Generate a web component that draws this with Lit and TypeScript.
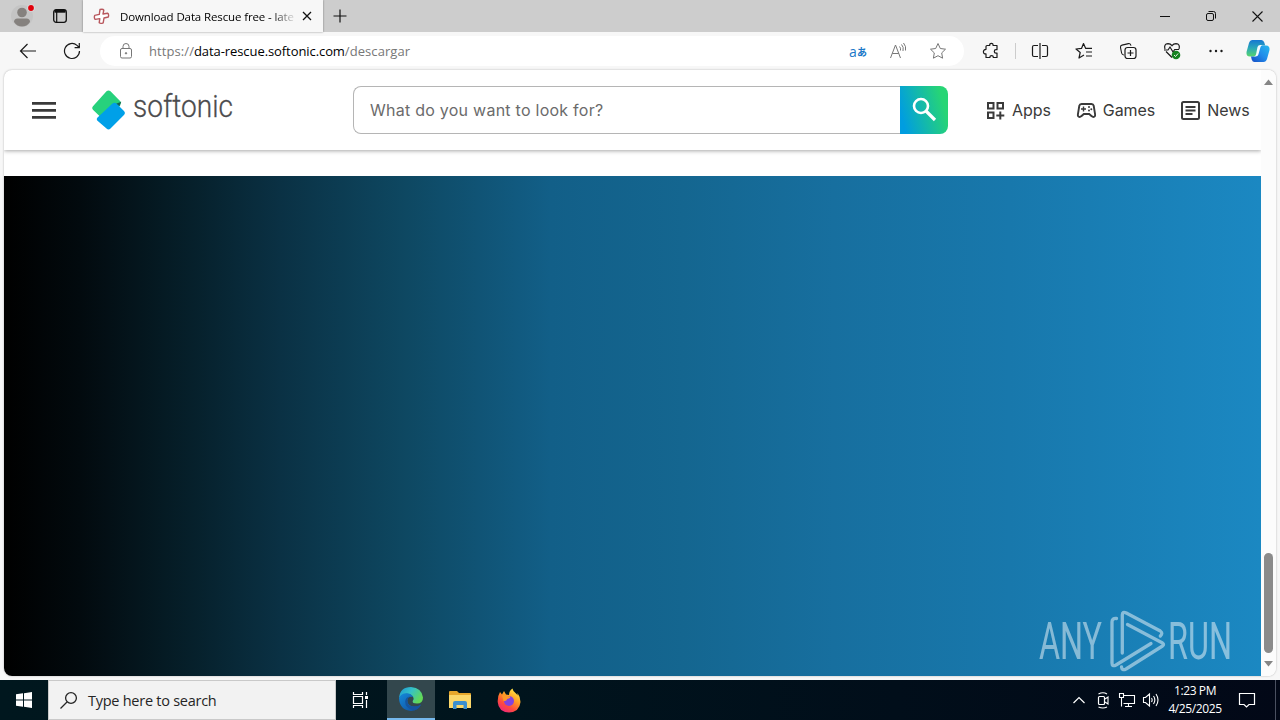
import { LitElement, html, svg, css } from 'lit';
import { customElement, state } from 'lit/decorators.js';

// wraps svg content in a square icon drawn at its natural size
const icon = (size: number, content: unknown) => html`
    <svg width="${size}" height="${size}" viewBox="0 0 ${size} ${size}" fill="none" stroke="currentColor">${content}</svg>
`;

@customElement('app-tabs')
export class Tabs extends LitElement {

    static styles = [
        css`
            :host {
                display: flex;
                height: 32px;
                background: #cdcdcd;
                font: 12px "Open Sans", "Noto Sans", sans-serif;
                color: #111;
            }

            svg {
                display: block;
                flex: none;
            }

            .cell {
                display: flex;
                align-items: center;
                justify-content: center;
            }

            .profile {
                width: 44px;
            }

            .actions {
                width: 32px;
            }

            .tab {
                display: flex;
                align-items: center;
                box-sizing: border-box;
                width: 240px;
                margin-left: 7px;
                padding: 0 7px 0 10px;
                background: #f7f7f7;
                box-shadow: 0 0 2px rgba(0, 0, 0, 0.4);
            }

            .title {
                width: 179px;
                margin-left: 10px;
                white-space: nowrap;
                font-size: 11.5px;
                letter-spacing: -0.12px;
                color: #000;
                -webkit-mask-image: linear-gradient(90deg, #000 152px, transparent 177px);
            }

            .close {
                width: 18px;
            }

            .new {
                width: 34px;
            }

            .window {
                display: flex;
                margin-left: auto;
            }

            .window .cell {
                width: 46px;
            }
        `
    ];

    render() {
        return html`
          <div class="cell profile">
              <svg width="32" height="32" viewBox="0 0 32 32">
                  <circle cx="16" cy="16" r="11" fill="#c4c4c4"></circle>
                  <circle cx="16" cy="12.500" r="4.800" fill="#85817e"></circle>
                  <path d="M8 22q0-3.500 3.500-3.500h9q3.500 0 3.500 3.500-3 4.500-8 4.500T8 22z" fill="#85817e"></path>
                  <circle cx="25" cy="8" r="3.600" fill="#e3e3e3"></circle>
                  <circle cx="25" cy="8" r="2.900" fill="#e0000b"></circle>
              </svg>
          </div>
          <div class="cell actions">
              ${icon(16, svg`<rect x="1.700" y="1.700" width="12.600" height="12.600" rx="2.500" stroke-width="1.300"></rect><path d="M4.700 4v10" stroke-width="1.200"></path><path d="M2.500 3.300h11" stroke-width="2.800"></path>`)}
          </div>
          <div class="tab">
              <svg width="17" height="17" viewBox="0 0 17 17" fill="#fff" stroke="#b8585e" stroke-width="1.400" stroke-linejoin="round">
                  <path d="M7 1.500q3-.8 3.800.6L10 6l4.500-.8q1.700 1 .8 3.800L11 10l-.8 4.800q-2.500 1.200-4 0l.6-4.200-4.600.8Q.8 10 1.700 7.400l4.600-1z"></path>
              </svg>
              <div class="title">Download Data Rescue free - late</div>
              <div class="cell close">${icon(10, svg`<path d="M1 1l8 8M9 1l-8 8" stroke-width="1.300"></path>`)}</div>
          </div>
          <div class="cell new">${icon(14, svg`<path d="M7 .5v13M.5 7h13" stroke-width="1.200"></path>`)}</div>
          <div class="window">
              <div class="cell">${icon(10, svg`<path d="M0 5.500h10"></path>`)}</div>
              <div class="cell">${icon(10, svg`<rect x=".500" y="2.500" width="7" height="7" rx="1.500"></rect><path d="M2.500.5h5q2 0 2 2v5"></path>`)}</div>
              <div class="cell">${icon(11, svg`<path d="M.5.500l10 10M10.500.500l-10 10" stroke-width="1.100"></path>`)}</div>
          </div>
        `;
    }
}

@customElement('app-toolbar')
export class Toolbar extends LitElement {

    static styles = [
        css`
            :host {
                display: flex;
                align-items: center;
                height: 38px;
                padding-left: 6px;
                background: #f7f7f7;
                color: #1a1a1a;
                font: 13px "Open Sans", "Noto Sans", sans-serif;
            }

            svg {
                display: block;
            }

            .cell {
                display: flex;
                align-items: center;
                justify-content: center;
                width: 44px;
            }

            .address {
                display: flex;
                align-items: center;
                box-sizing: border-box;
                width: 864px;
                height: 30px;
                margin: 0 5px 0 6px;
                padding: 0 6px 0 16px;
                border-radius: 15px;
                background: #fff;
                color: #777;
            }

            .url {
                margin: 0 auto 0 13px;
                font-size: 13px;
            }

            .path {
                letter-spacing: 0.08px;
            }

            .host {
                color: #000;
                letter-spacing: -0.08px;
            }

            .address .cell {
                width: 40px;
            }

            .translate {
                color: #1a78c8;
                font: 14px "Open Sans", "Noto Sans CJK JP", sans-serif;
            }

            .translate small {
                font: bold 10px "Noto Sans CJK JP", sans-serif;
            }

            .divider {
                width: 1px;
                height: 16px;
                margin: 0 2px;
                background: #ccc;
            }

            .copilot {
                width: 40px;
            }
        `
    ];

    render() {
        return html`
          <div class="cell">${icon(18, svg`<path d="M17 9H1.500M8.500 2l-7 7 7 7" stroke-width="1.200"></path>`)}</div>
          <div class="cell">${icon(18, svg`<path d="M16.500 9A7.500 7.500 0 1 1 14 3.400L16.300 5.500M16.300 1v4.700h-4.700" stroke-width="1.200"></path>`)}</div>

          <div class="address">
              ${icon(20, svg`<rect x="4.500" y="7.500" width="11" height="9.500" rx="1.500"></rect><path d="M7 7V5.500q0-3 3-3t3 3V7"></path><circle cx="10" cy="12.300" r=".700" fill="currentColor"></circle>`)}
              <div class="url"><span class="path">https://</span><span class="host">data-rescue.softonic.com</span><span class="path">/descargar</span></div>
              <div class="cell translate">a<small>あ</small></div>
              <div class="cell">${icon(18, svg`<path d="M1.500 16L6.500 3l5 13M3.300 11.500h6.500M10.500 4.500q1.500 1.500 1 4M12.500 2.500q2.500 2.500 1.500 6.500M14.500 1q3 3.500 2 7.500"></path>`)}</div>
              <div class="cell">${icon(18, svg`<path d="M9 1.500l2.300 5 5.200.7-3.800 3.700.9 5.300L9 13.700l-4.600 2.500.9-5.300L1.500 7.200l5.200-.7z" stroke-linejoin="round"></path>`)}</div>
          </div>

          <div class="cell">${icon(18, svg`<path d="M5 3.500h2.700V3q0-1.700 1.700-1.700T11.100 3v.5H15v4.200h-1q-1.700 0-1.700 1.700t1.700 1.700h1v4.400h-3.700v-.4q0-1.400-1.700-1.400t-1.700 1.400v.4H4v-3.600q-2.600.1-2.600-2.100T4 7.300V4.500q0-1 1-1z" stroke-width="1.200" stroke-linejoin="round"></path>`)}</div>
          <div class="divider"></div>
          <div class="cell">${icon(18, svg`<path d="M7 3.500H3q-1.500 0-1.500 1.500v8q0 1.500 1.500 1.500h4M9 1v16M11 3.500h4q1.500 0 1.500 1.500v8q0 1.500-1.500 1.500h-4" stroke-width="1.200"></path>`)}</div>
          <div class="cell">${icon(18, svg`<path d="M9 13L4 16l1.200-5.500L1 7l5.500-.6L8.500 1.500l2.200 4.900H17M11 10h6M11 14h6" stroke-width="1.200" stroke-linejoin="round"></path>`)}</div>
          <div class="cell">${icon(18, svg`<path d="M5 13q-2 0-2.400-2L1.500 5.500q-.3-2 1.500-2.400l6.500-1.500q2-.4 2.500 2" stroke-width="1.100"></path><rect x="6" y="5.500" width="11" height="11" rx="2.500" stroke-width="1.200"></rect><path d="M11.500 8v6M8.500 11h6" stroke-width="1.200"></path>`)}</div>
          <div class="cell">${icon(18, svg`<path d="M3 9.500L9 15.500M2 7Q.5 2 5 1.700q2.500 0 4 2 1.500-2 4-2Q17.500 2 16 7M1 8h4l2-3 3 5 1.700-2.500H16" stroke-width="1.200"></path><circle cx="13" cy="13" r="4.300" fill="#168321" stroke="none"></circle><path d="M11 13l1.500 1.500 2.600-3" stroke="#fff" stroke-width=".900"></path>`)}</div>
          <div class="cell">${icon(18, svg`<g fill="currentColor" stroke="none"><circle cx="3.500" cy="9" r="1.200"></circle><circle cx="9" cy="9" r="1.200"></circle><circle cx="14.500" cy="9" r="1.200"></circle></g>`)}</div>
          <div class="cell copilot">
              <svg width="26" height="26" viewBox="0 0 26 26">
                  <defs>
                      <linearGradient id="left" x1="0" y1="0" x2="0" y2="1"><stop offset="0" stop-color="#1677d2"></stop><stop offset=".5" stop-color="#2ba9b8"></stop><stop offset="1" stop-color="#58d56c"></stop></linearGradient>
                      <linearGradient id="right" x1="1" y1="0" x2="0" y2="1"><stop offset="0" stop-color="#25b9ee"></stop><stop offset=".5" stop-color="#218bea"></stop><stop offset="1" stop-color="#154cc4"></stop></linearGradient>
                  </defs>
                  <path d="M7.500 2h9q2 0 2.800 2.500l.9 3h-3.700q-2 0-2.600 2L12 16q-.7 2.500-3 2.500H5Q1 18.500 1.500 14L4 5q1-3 3.500-3z" fill="url(#left)"></path>
                  <path d="M18.500 24h-9Q7.500 24 6.700 21.500l-.7-3h3q2.300 0 3-2.500L14 9.500q.6-2 2.500-2H21q4 0 3.500 4.500L22 21q-1 3-3.500 3z" fill="url(#right)"></path>
                  <path d="M12.500 9q.6-2 2.800-2h2.200q-1.500.3-2 2L13.400 16.500q-.6 2-2.800 2H8.500q2 0 2.500-2z" fill="#f4fbff"></path>
              </svg>
          </div>
        `;
    }
}

@customElement('app-page')
export class Page extends LitElement {

    @state() links = [
        { name: 'Apps', art: svg`<path d="M3 3h5.500v5.500H3zM12.500 3H18v5.500h-5.500zM3 12.500h5.500V18H3zM15.300 11.500v8M11.300 15.500h8" stroke-width="2"></path>` },
        { name: 'Games', art: svg`<path d="M5.500 4h10q1.800 0 2.200 1.800l1.400 8.500q.3 2.700-1.700 2.700-1 0-1.700-.8L13.200 14H7.800l-2.500 2.200q-.7.800-1.700.8-2 0-1.700-2.700l1.400-8.500Q3.700 4 5.500 4z" stroke-width="1.900"></path><path d="M7.500 6.500v5M5 9h5" stroke-width="1.400"></path><g fill="currentColor" stroke="none"><circle cx="13" cy="7" r="1"></circle><circle cx="15.300" cy="9.300" r="1"></circle><circle cx="13" cy="10.500" r="1"></circle></g>` },
        { name: 'News', art: svg`<rect x="2" y="2" width="17" height="17" rx="1.500" stroke-width="2"></rect><path d="M5.500 7h10M5.500 10.500h10M5.500 14h7" stroke-width="1.800"></path>` }
    ];

    static styles = [
        css`
            :host {
                display: flex;
                height: 606px;
                margin: 0 4px 4px;
                border-radius: 8px;
                overflow: hidden;
                background: #fff;
                box-shadow: 0 0 2px rgba(0, 0, 0, 0.3);
                font-family: Inter, "Liberation Sans", sans-serif;
                color: #3a3a3a;
            }

            svg {
                display: block;
                flex: none;
                overflow: visible;
            }

            main {
                display: flex;
                flex-direction: column;
                width: 1257px;
            }

            header {
                display: flex;
                align-items: center;
                box-sizing: border-box;
                height: 80px;
                padding: 0 12px 0 28px;
                box-shadow: 0 1px 4px rgba(0, 0, 0, 0.35);
            }

            .logo {
                margin-left: 35px;
            }

            .logo text {
                font: 300 31px Roboto, sans-serif;
                fill: #4b4b4d;
                stroke: #4b4b4d;
                stroke-width: 0.3px;
            }

            .search {
                display: flex;
                width: 595px;
                height: 48px;
                margin-left: 118px;
            }

            .field {
                box-sizing: border-box;
                width: 547px;
                padding-left: 16px;
                border: 1px solid #b5b5b5;
                border-right: none;
                border-radius: 8px 0 0 8px;
                font-size: 16px;
                line-height: 47px;
                letter-spacing: 0.25px;
                color: #6b6b6b;
            }

            .go {
                display: flex;
                align-items: center;
                justify-content: center;
                width: 48px;
                border-radius: 0 8px 8px 0;
                background: linear-gradient(75deg, #009de0 10%, #27d575 85%);
                color: #fff;
            }

            nav {
                display: flex;
                gap: 25px;
                margin-left: 37px;
            }

            .link {
                display: flex;
                align-items: center;
                gap: 6px;
                font-size: 16px;
                letter-spacing: -0.07px;
                white-space: nowrap;
            }

            .hero {
                display: flex;
                align-items: flex-end;
                justify-content: flex-end;
                box-sizing: border-box;
                height: 500px;
                margin-top: 26px;
                padding: 0 27px 3px 0;
                background: linear-gradient(90deg, #000 0, #020a0e 6%, #06202b 15%, #0a3144 22%, #0e4862 32%, #125f88 43.5%, #146690 54%, #176f9f 66%, #1878ac 80%, #1b88c2 100%);
            }

            .mark text {
                font: 400 51.500px Roboto, sans-serif;
                fill: #fff;
            }

            .scroll {
                display: flex;
                flex-direction: column;
                align-items: center;
                justify-content: space-between;
                box-sizing: border-box;
                width: 15px;
                padding: 9px 0 9px;
                background: #fcfcfc;
            }

            .thumb {
                width: 9px;
                height: 100px;
                margin: auto 0 8px;
                border-radius: 5px;
                background: #8b8b8b;
            }
        `
    ];

    render() {
        return html`
          <main>
              <header>
                  <svg width="25" height="18" viewBox="0 0 25 18" fill="#3a3a3a">
                      <path d="M0 1h24v2.700H0zM0 8h24v2.700H0zM0 15h24v2.700H0z"></path>
                  </svg>
                  <svg class="logo" width="143" height="42" viewBox="0 0 143 42">
                      <path d="M14.500 2.300q2-1.800 4 0L29 13l-1 4L12.500 28q-2 1.500-4 0l-7.300-7q-2-1.800 0-4z" fill="#27d17c"></path>
                      <path d="M22 15.500L29.300 12.700 27.500 17z" fill="#17624f"></path>
                      <path d="M20.500 14.500q2-1.500 4 0l7.700 7.800q1.600 1.700 0 3.500L18.500 39.500q-2 2-4 0L5.200 31.500q-1.200-1.500.3-3z" fill="#00a0e8"></path>
                      <text x="41" y="27.500" textLength="100" lengthAdjust="spacingAndGlyphs">softonic</text>
                  </svg>
                  <div class="search">
                      <div class="field">What do you want to look for?</div>
                      <div class="go">${icon(26, svg`<circle cx="10" cy="9" r="7" stroke-width="2.600"></circle><path d="M15 14l9 9" stroke-width="3.200"></path>`)}</div>
                  </div>
                  <nav>
                      ${this.links.map((link) => html`<div class="link">${icon(21, link.art)}<span>${link.name}</span></div>`)}
                  </nav>
              </header>
              <div class="hero">
                  <svg class="mark" width="196" height="64" viewBox="0 0 196 64" opacity="0.480">
                      <text x="1" y="49.500" textLength="63" lengthAdjust="spacingAndGlyphs">ANY</text>
                      <path fill="none" stroke="#fff" stroke-width="3.300" stroke-linecap="round" stroke-linejoin="round"
                          d="M78.500 9.500Q74 9 74 13v41q0 4 4 2l35-21.500M84.300 44V6q0-4 4-2l34 18q3 2 0 5M89.500 15.500l35 18.500q2 1.500 0 3L88 60q-4 2-4.500-2"></path>
                      <text x="130" y="49.500" textLength="64" lengthAdjust="spacingAndGlyphs">RUN</text>
                  </svg>
              </div>
          </main>
          <div class="scroll">
              <svg width="9" height="6" viewBox="0 0 9 6"><path d="M0 6l4.500-5.500L9 6z" fill="#858585"></path></svg>
              <div class="thumb"></div>
              <svg width="9" height="6" viewBox="0 0 9 6"><path d="M0 0l4.500 5.500L9 0z" fill="#858585"></path></svg>
          </div>
        `;
    }
}

@customElement('app-taskbar')
export class Taskbar extends LitElement {

    static styles = [
        css`
            :host {
                display: flex;
                height: 40px;
                background: linear-gradient(90deg, #00171e 0, #00141d 40%, #020817 100%);
                color: #fff;
                font: 12px "Open Sans", "Noto Sans", sans-serif;
            }

            svg {
                display: block;
            }

            .cell {
                display: flex;
                align-items: center;
                justify-content: center;
                width: 48px;
            }

            .search {
                display: flex;
                align-items: center;
                box-sizing: border-box;
                width: 288px;
                padding-left: 11px;
                border: 1px solid #c9c9c9;
                background: #f2f2f2;
                color: #252525;
                font-size: 14.500px;
            }

            .search span {
                margin-left: 10px;
                letter-spacing: -0.26px;
            }

            .apps {
                display: flex;
                gap: 1px;
                margin-left: 3px;
            }

            .apps .active {
                box-sizing: border-box;
                border-bottom: 2px solid #76b9ed;
                background: #33474d;
            }

            .tray {
                display: flex;
                margin-left: auto;
            }

            .tray .cell {
                width: 24px;
            }

            .clock {
                display: flex;
                flex-direction: column;
                justify-content: center;
                width: 64px;
                line-height: 18px;
                font-size: 12px;
                letter-spacing: -0.4px;
                text-align: center;
            }

            .tray .notes {
                width: 40px;
            }

            .desktop {
                width: 4px;
                margin-left: 8px;
                border-left: 1px solid #4a5060;
            }
        `
    ];

    render() {
        return html`
          <div class="cell">
              <svg width="16" height="16" viewBox="0 0 16 16" fill="#fff"><path d="M0 2.300l7-1v6.200H0zM8 1.200L16 0v7.500H8zM0 8.500h7v6.200l-7-1zM8 8.500h8V16l-8-1.200z"></path></svg>
          </div>
          <div class="search">
              ${icon(18, svg`<circle cx="11" cy="7" r="5.400" stroke-width="1.300"></circle><path d="M7 11L.500 17.500" stroke-width="1.300"></path>`)}
              <span>Type here to search</span>
          </div>
          <div class="cell">${icon(18, svg`<path d="M2.500 1v2.500h9V1M2.500 17v-2.500h9V17M2.500 5.500h9v7h-9zM15.500 1v3M15.500 9v8" stroke-width="1.200"></path><path d="M14 5h3v3h-3z" fill="#fff" stroke="none"></path>`)}</div>
          <div class="apps">
              <div class="cell active">
                  <svg width="26" height="26" viewBox="0 0 26 26">
                      <defs>
                          <linearGradient id="top" x1="0" y1="0" x2="1" y2=".5"><stop offset="0" stop-color="#1b95d5"></stop><stop offset=".5" stop-color="#35c1c8"></stop><stop offset="1" stop-color="#62d957"></stop></linearGradient>
                          <linearGradient id="low" x1="0" y1="0" x2="1" y2="1"><stop offset="0" stop-color="#1489db"></stop><stop offset="1" stop-color="#114a97"></stop></linearGradient>
                      </defs>
                      <path d="M1 12Q2 1 13 1q11 1 12 10.500 0 6-6 6-5 0-4.300-2.500 1.800-2 .3-4.500Q12 7 7 8q-4 1-6 4z" fill="url(#top)"></path>
                      <path d="M1 12q2-4.500 7.500-4.700 5 .2 6.700 3.700Q10 9.500 9.300 14.500 9.500 20 16 20.500q4 .3 7-2Q20 25 13 25 1.500 24 1 12z" fill="url(#low)"></path>
                      <path d="M9.300 14.500q-.3 6 6.700 6 4 .3 7-2Q21 23 16.500 24.300 7 23 7.200 15.500q.5-4.500 4.800-5-2.500 1-2.700 4z" fill="#15549f"></path>
                  </svg>
              </div>
              <div class="cell">
                  <svg width="24" height="20" viewBox="0 0 24 20">
                      <path d="M1 2q0-1 1-1h7l2 2h11q1 0 1 1v13H1z" fill="#e7a72b"></path>
                      <path d="M1 5h22v13H1z" fill="#fbd76a"></path>
                      <path d="M5 19v-6q0-2 2-2h10q2 0 2 2v6h-3.500v-4h-7v4z" fill="#3b8fd0"></path>
                  </svg>
              </div>
              <div class="cell">
                  <svg width="24" height="25" viewBox="0 0 24 25">
                      <defs>
                          <linearGradient id="fox" x1=".8" y1="0" x2=".2" y2="1"><stop offset="0" stop-color="#fff04a"></stop><stop offset=".4" stop-color="#ff9a22"></stop><stop offset=".7" stop-color="#ff4a3d"></stop><stop offset="1" stop-color="#ed2283"></stop></linearGradient>
                      </defs>
                      <path d="M3 4l2 2.500 2-3.500 2 3.500 3 .5q0-4.500 3.500-6.500.5 3 3 4.500 1.500 1 2 2.500V5q3 4 3 9Q22.500 24 12 24.500 1.500 24 .7 14 .5 8 3 4z" fill="url(#fox)"></path>
                      <circle cx="12" cy="13" r="5" fill="#8143df"></circle>
                      <path d="M5 7.500q3-1.500 5.500.5l3 .5q0 2-3.500 2.500 0 2-3.500 2z" fill="#ff9828"></path>
                  </svg>
              </div>
          </div>
          <div class="tray">
              <div class="cell">${icon(14, svg`<path d="M1.500 10L7 4.500l5.500 5.500" stroke-width="1.200"></path>`)}</div>
              <div class="cell">${icon(18, svg`<rect x="4.500" y="5.500" width="6" height="8" rx="1" stroke-width="1.200"></rect><path d="M11 8l3-2v7l-3-2M4.500 3Q9 .5 13 3M4.500 16q4.500 2 8.500 0" stroke-width="1.100"></path>`)}</div>
              <div class="cell">${icon(18, svg`<path d="M6 4.500h10.500v8H5.500M10.500 12.500v3M7 15.500h7M3.500 6.500v9M1.500 2.500h4v4h-4z" stroke-width="1.100"></path>`)}</div>
              <div class="cell">${icon(18, svg`<path d="M1.500 6.500h2l4-3.500v12l-4-3.500h-2zM9.500 7q1.300 2 0 4M11.500 5q2.700 4 0 8M14 3q4 6 0 12" stroke-width="1.100"></path>`)}</div>
              <div class="clock"><span>1:23 PM</span><span>4/25/2025</span></div>
              <div class="cell notes">${icon(18, svg`<path d="M1.500 2.500h15v11H11l-2.500 2.500L6 13.500H1.500z" stroke-width="1.200"></path>`)}</div>
              <div class="desktop"></div>
          </div>
        `;
    }
}

@customElement('app-root')
export class AppRoot extends LitElement {

    static styles = [
        css`
            :host {
                display: block;
                width: 1280px;
                height: 720px;
                overflow: hidden;
                background: #f7f7f7;
            }
        `
    ];

    render() {
        return html`
          <app-tabs></app-tabs>
          <app-toolbar></app-toolbar>
          <app-page></app-page>
          <app-taskbar></app-taskbar>
        `;
    }
}
